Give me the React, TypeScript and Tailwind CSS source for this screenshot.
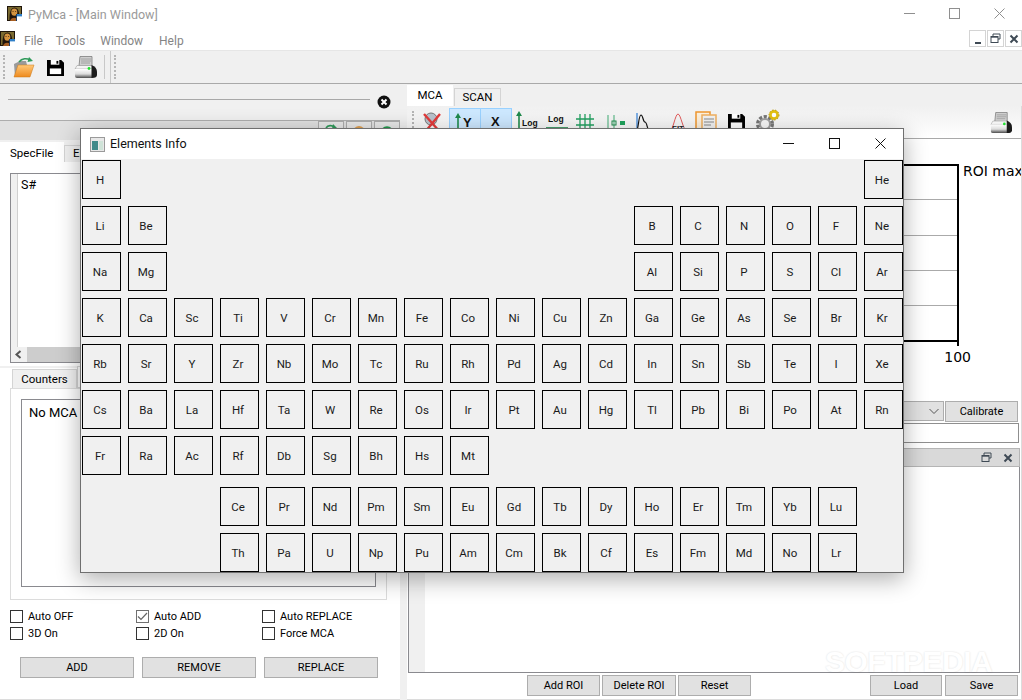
import React from "react";

const _ = null;
const rows: (string | null)[][] = [
  ["H", _, _, _, _, _, _, _, _, _, _, _, _, _, _, _, _, "He"],
  ["Li", "Be", _, _, _, _, _, _, _, _, _, _, "B", "C", "N", "O", "F", "Ne"],
  ["Na", "Mg", _, _, _, _, _, _, _, _, _, _, "Al", "Si", "P", "S", "Cl", "Ar"],
  ["K", "Ca", "Sc", "Ti", "V", "Cr", "Mn", "Fe", "Co", "Ni", "Cu", "Zn", "Ga", "Ge", "As", "Se", "Br", "Kr"],
  ["Rb", "Sr", "Y", "Zr", "Nb", "Mo", "Tc", "Ru", "Rh", "Pd", "Ag", "Cd", "In", "Sn", "Sb", "Te", "I", "Xe"],
  ["Cs", "Ba", "La", "Hf", "Ta", "W", "Re", "Os", "Ir", "Pt", "Au", "Hg", "Tl", "Pb", "Bi", "Po", "At", "Rn"],
  ["Fr", "Ra", "Ac", "Rf", "Db", "Sg", "Bh", "Hs", "Mt", _, _, _, _, _, _, _, _, _],
];
const rareEarth: (string | null)[][] = [
  [_, _, _, "Ce", "Pr", "Nd", "Pm", "Sm", "Eu", "Gd", "Tb", "Dy", "Ho", "Er", "Tm", "Yb", "Lu", _],
  [_, _, _, "Th", "Pa", "U", "Np", "Pu", "Am", "Cm", "Bk", "Cf", "Es", "Fm", "Md", "No", "Lr", _],
];

function Mona({ className = "" }: { className?: string }) {
  return (
    <svg viewBox="0 0 15 15" className={className}>
      <rect width="15" height="15" fill="#1e140a" />
      <rect x="1" y="1" width="13" height="13" fill="#7a6a30" />
      <path d="M2.5 14 C2.5 8 3 2 7.5 1.5 C12 2 12.5 8 12.5 14Z" fill="#21150b" />
      <ellipse cx="7.3" cy="6.2" rx="3" ry="3.6" fill="#d4933f" />
      <path d="M5.5 5.5H6.6M8 5.5H9.1" stroke="#4a2c10" strokeWidth="0.8" />
      <path d="M3 15 C4 10.5 10 10.5 12 15Z" fill="#a85f22" />
      <rect x="9" y="8" width="6" height="7" fill="#fff" />
      <rect x="9" y="8" width="6" height="2.4" fill="#2f7fc8" />
      <rect x="9" y="8" width="1" height="7" fill="#1d3d66" />
    </svg>
  );
}

function Floppy({ className = "" }: { className?: string }) {
  return (
    <svg viewBox="0 0 18 18" className={className}>
      <path d="M0 1 H15 L18 4 V18 H0Z" fill="#000" />
      <rect x="4" y="1" width="9" height="5" fill="#fff" />
      <rect x="10" y="2" width="2" height="3" fill="#000" />
      <rect x="3" y="10" width="12" height="6" fill="#fff" />
    </svg>
  );
}

function Printer({ className = "" }: { className?: string }) {
  return (
    <svg viewBox="0 0 23 23" className={className}>
      <defs>
        <linearGradient id="pb" x1="0" y1="0" x2="0" y2="1">
          <stop offset="0" stopColor="#ffffff" />
          <stop offset="0.55" stopColor="#dcdcdc" />
          <stop offset="1" stopColor="#4a4a4a" />
        </linearGradient>
      </defs>
      <path d="M6 0.5 H18 L18 10 H5Z" fill="#cfcfcf" stroke="#7c7c7c" strokeWidth="0.8" />
      <path d="M7 3H17M7 5H17M7 7H16" stroke="#989898" strokeWidth="0.8" />
      <path d="M3 9.5 H18 L19 13 H1Z" fill="#f4f4f4" stroke="#777" strokeWidth="0.4" />
      <path d="M1 13 H18 V22 H3 Q1 22 1 20Z" fill="url(#pb)" />
      <path d="M17.5 9 Q23 11 23 16 V19 Q23 22 18 22 H17.5Z" fill="#1c1c1c" />
      <circle cx="15" cy="12.5" r="1.4" fill="#22e030" />
    </svg>
  );
}

function Folder({ className = "" }: { className?: string }) {
  return (
    <svg viewBox="0 0 23 21" className={className}>
      <defs>
        <linearGradient id="fo" x1="0" y1="0" x2="0" y2="1">
          <stop offset="0" stopColor="#ffc878" />
          <stop offset="1" stopColor="#ee8a1e" />
        </linearGradient>
      </defs>
      <path d="M2 7 L8 4 H14 L15 8 L5 20 H3Z" fill="#9a9a9a" />
      <path d="M6 8 H22 L18 20 H2Z" fill="url(#fo)" stroke="#c9781a" strokeWidth="0.5" />
      <path d="M7 5 C10 1 15 1 18 3" fill="none" stroke="#2f9a5a" strokeWidth="1.6" />
      <path d="M17 0 L21 4 L15.5 5Z" fill="#2f9a5a" />
    </svg>
  );
}

function Handle({ className = "" }: { className?: string }) {
  return <div className={`w-[2px] border-l-2 border-dotted border-[#b5b5b5] ${className}`} />;
}

function Win10Controls({ color, widths }: { color: string; widths: string }) {
  return (
    <div className="flex items-center">
      <div className={`flex justify-center ${widths}`}>
        <svg width="11" height="11" viewBox="0 0 11 11"><path d="M0 5.5H11" stroke={color} /></svg>
      </div>
      <div className={`flex justify-center ${widths}`}>
        <svg width="11" height="11" viewBox="0 0 11 11"><rect x="0.5" y="0.5" width="10" height="10" fill="none" stroke={color} /></svg>
      </div>
      <div className={`flex justify-center ${widths}`}>
        <svg width="11" height="11" viewBox="0 0 11 11"><path d="M0.5 0.5L10.5 10.5M10.5 0.5L0.5 10.5" stroke={color} /></svg>
      </div>
    </div>
  );
}

function Check({ label, checked = false }: { label: string; checked?: boolean }) {
  return (
    <div className="flex h-[17px] w-[126px] items-center gap-[5px]">
      <span className={`flex h-[13px] w-[13px] items-center justify-center border bg-white ${checked ? "border-[#707070]" : "border-[#333]"}`}>
        {checked && (
          <svg width="11" height="11" viewBox="0 0 11 11"><path d="M1 5.5L4 8.5L10 2" fill="none" stroke="#666" strokeWidth="1.2" /></svg>
        )}
      </span>
      <span className="whitespace-nowrap">{label}</span>
    </div>
  );
}

function QtButton({ label, className = "" }: { label: string; className?: string }) {
  return (
    <button className={`flex h-[21px] items-center justify-center border border-[#adadad] bg-[#e1e1e1] pt-[2px] text-[11px] text-black ${className}`}>
      {label}
    </button>
  );
}

function Cell({ el }: { el: string | null }) {
  if (!el) return <div className="h-[39px] w-[39px]" />;
  return (
    <button className="flex h-[39px] w-[39px] items-center justify-center border border-black bg-[#f0f0f0] pr-[3px] pt-[2px] text-[11.5px] text-[#1a1a1a]">
      {el}
    </button>
  );
}

function MiniX() {
  return (
    <svg width="10" height="10" viewBox="0 0 10 10"><path d="M1.5 1.5L8.5 8.5M8.5 1.5L1.5 8.5" stroke="#3f4a55" strokeWidth="2" /></svg>
  );
}
function MiniRestore() {
  return (
    <svg width="11" height="11" viewBox="0 0 11 11">
      <path d="M3 3V1H10V6H8" fill="none" stroke="#3f4a55" />
      <rect x="1" y="3.5" width="7" height="6" fill="none" stroke="#3f4a55" />
      <path d="M1 4H8" stroke="#3f4a55" strokeWidth="1.4" />
    </svg>
  );
}

function McaTools() {
  return (
    <div className="flex h-full items-start pl-[5px] pt-[2px]">
      <Handle className="mt-[3px] h-[24px]" />
      <svg width="22" height="22" viewBox="0 0 22 22" className="ml-[8px] mt-[3px]">
        <circle cx="9" cy="8" r="6" fill="#b9c2cc" stroke="#777" />
        <path d="M2 3L18 21M18 3L3 21" stroke="#e23a3a" strokeWidth="2.4" />
      </svg>
      <div className="ml-[5px] flex h-[30px] w-[32px] items-start justify-center border border-[#99d1ff] bg-[#cde8ff]">
        <svg width="24" height="24" viewBox="0 0 24 24" className="mt-[3px]">
          <path d="M5 24V4" stroke="#1f8a4c" strokeWidth="1.6" />
          <path d="M5 1L8 6H2Z" fill="#1f8a4c" />
          <text x="10" y="15" fontSize="13" fontWeight="700" fontFamily="'Liberation Sans',sans-serif" fill="#111">Y</text>
        </svg>
      </div>
      <div className="flex h-[30px] w-[31px] items-start justify-center border border-l-0 border-[#99d1ff] bg-[#cde8ff]">
        <svg width="24" height="24" viewBox="0 0 24 24" className="mt-[3px]">
          <text x="7" y="14" fontSize="13" fontWeight="700" fontFamily="'Liberation Sans',sans-serif" fill="#111">X</text>
          <path d="M1 21H23" stroke="#1f8a4c" strokeWidth="1.6" />
        </svg>
      </div>
      <svg width="24" height="24" viewBox="0 0 24 24" className="ml-[4px] mt-[2px]">
        <path d="M3 24V4" stroke="#1f8a4c" strokeWidth="1.6" />
        <path d="M3 1L6 6H0Z" fill="#1f8a4c" />
        <text x="6" y="16" fontSize="8.5" fontWeight="700" fontFamily="'Liberation Sans',sans-serif" fill="#111">Log</text>
      </svg>
      <svg width="24" height="24" viewBox="0 0 24 24" className="ml-[5px] mt-[2px]">
        <text x="3" y="12" fontSize="8.5" fontWeight="700" fontFamily="'Liberation Sans',sans-serif" fill="#111">Log</text>
        <path d="M1 18H23" stroke="#1f8a4c" strokeWidth="1.6" />
      </svg>
      <svg width="20" height="20" viewBox="0 0 20 20" className="ml-[6px] mt-[6px]">
        <path d="M5 0V20M10 0V20M15 0V20M1 5H19M1 11H19" stroke="#22a060" strokeWidth="1.3" />
      </svg>
      <svg width="22" height="20" viewBox="0 0 22 20" className="ml-[12px] mt-[6px]">
        <path d="M1 1V20M7 1V20" stroke="#5fb98a" strokeWidth="1.2" />
        <rect x="5" y="7" width="4" height="4" fill="none" stroke="#1f8a4c" />
        <rect x="13" y="7" width="5" height="4" fill="#1fa35c" />
      </svg>
      <svg width="22" height="20" viewBox="0 0 22 20" className="ml-[6px] mt-[5px]">
        <path d="M2 20V0" stroke="#2f7fd8" strokeWidth="1.2" />
        <path d="M0 20C4 20 3 2 6 2C8 2 8 9 10 9C12 9 12 16 14 18C15 19 16 20 18 20" fill="none" stroke="#111" strokeWidth="1.2" />
      </svg>
      <svg width="22" height="22" viewBox="0 0 22 22" className="ml-[11px] mt-[4px]">
        <path d="M1 20C5 20 7 2 10 2C13 2 15 20 20 20" fill="none" stroke="#e25a5a" />
        <text x="4" y="19" fontSize="8" fontWeight="700" fontFamily="'Liberation Sans',sans-serif" fill="#222">FIT</text>
      </svg>
      <svg width="22" height="22" viewBox="0 0 22 22" className="ml-[5px] mt-[3px]">
        <rect x="1" y="1" width="14" height="17" fill="#fdf0dc" stroke="#f0972e" strokeWidth="1.5" />
        <rect x="7" y="4" width="14" height="14" fill="#f2f2f2" stroke="#f0b060" strokeWidth="1.5" />
        <path d="M9 8H19M9 11H19M9 14H16" stroke="#8a8a8a" />
      </svg>
      <Floppy className="ml-[11px] mt-[5px] h-[17px] w-[17px]" />
      <svg width="25" height="24" viewBox="0 0 25 24" className="ml-[10px] mt-[1px]">
        <circle cx="10" cy="15" r="7" fill="none" stroke="#777" strokeWidth="4" strokeDasharray="3 1.5" />
        <circle cx="10" cy="15" r="5" fill="none" stroke="#a0a0a0" strokeWidth="2" />
        <circle cx="19" cy="6" r="3.6" fill="#fff" stroke="#e3c010" strokeWidth="2.6" />
        <circle cx="19" cy="6" r="5" fill="none" stroke="#b89a10" strokeWidth="1" strokeDasharray="1.5 1.5" />
      </svg>
      <Printer className="ml-auto mr-[9px] mt-[4px] h-[22px] w-[22px]" />
    </div>
  );
}

export default function App() {
  return (
    <div className="relative flex h-[700px] w-[1022px] flex-col overflow-hidden bg-[#f0f0f0] font-['Roboto',sans-serif] text-[12px] text-black">
      {/* Title bar */}
      <div className="flex h-[27px] items-center bg-white">
        <Mona className="ml-[7px] h-[15px] w-[15px]" />
        <span className="ml-[6px] pt-[3px] text-[12.5px] text-[#9a9a9a]">PyMca - [Main Window]</span>
        <div className="ml-auto">
          <Win10Controls color="#8f8f8f" widths="w-[45px]" />
        </div>
      </div>
      {/* Menu bar */}
      <div className="flex h-[24px] items-center border-b border-[#e6e6e6] bg-white text-[12px] text-[#858585]">
        <Mona className="h-[15px] w-[15px]" />
        <span className="ml-[9px] pt-[5px]">File</span>
        <span className="ml-[13px] pt-[5px]">Tools</span>
        <span className="ml-[15px] pt-[5px]">Window</span>
        <span className="ml-[16px] pt-[5px]">Help</span>
        <div className="ml-auto flex gap-[1px]">
          <div className="flex h-[17px] w-[17px] items-end justify-center border border-[#d4d4d4] pb-[2px]">
            <div className="h-[2px] w-[6px] bg-[#3f4a55]" />
          </div>
          <div className="flex h-[17px] w-[17px] items-center justify-center border border-[#d4d4d4]"><MiniRestore /></div>
          <div className="flex h-[17px] w-[17px] items-center justify-center border border-[#d4d4d4]"><MiniX /></div>
        </div>
      </div>
      {/* Main toolbar */}
      <div className="flex h-[33px] items-center border-b border-[#a9a9a9] bg-[#f0f0f0] pl-[3px]">
        <Handle className="h-[24px]" />
        <Folder className="ml-[7px] h-[21px] w-[23px]" />
        <Floppy className="ml-[12px] h-[17px] w-[17px]" />
        <Printer className="ml-[10px] h-[23px] w-[23px]" />
        <div className="ml-[7px] h-[24px] w-px bg-[#c8c8c8]" />
        <div className="ml-[5px] h-[32px] w-px bg-[#c8c8c8]" />
        <Handle className="ml-[3px] h-[24px]" />
      </div>

      {/* Body */}
      <div className="flex min-h-0 flex-1">
        {/* Left column */}
        <div className="flex w-[400px] flex-col">
          <div className="flex h-[36px] items-center pl-[8px]">
            <div className="mt-[-6px] h-px w-[362px] bg-[#a8a8a8]" />
            <svg width="14" height="14" viewBox="0 0 14 14" className="ml-[7px] mt-[-1px]">
              <circle cx="7" cy="7" r="6.5" fill="#111" />
              <path d="M4.5 4.5L9.5 9.5M9.5 4.5L4.5 9.5" stroke="#fff" strokeWidth="2" />
            </svg>
          </div>
          <div className="flex h-[20px] gap-[2px] border-t border-[#adadad] bg-[#e1e1e1]">
            <div className="flex-1" />
            <div className="ml-auto flex h-[20px] w-[26px] justify-center border border-[#adadad] bg-[#e8e8e8]">
              <svg width="14" height="12" viewBox="0 0 14 12" className="mt-[1px]"><path d="M2 5C4 2 8 2 10 4" fill="none" stroke="#2f9a5a" strokeWidth="1.6" /><path d="M9 1L13 5L8 6Z" fill="#2f9a5a" /></svg>
            </div>
            <div className="flex h-[20px] w-[26px] justify-center border border-[#adadad] bg-[#e8e8e8]">
              <svg width="14" height="14" viewBox="0 0 14 14" className="mt-[2px]"><circle cx="7" cy="8" r="6" fill="#e0a050" /><rect x="3" y="5" width="8" height="3" fill="#5a3a1a" /></svg>
            </div>
            <div className="flex h-[20px] w-[26px] justify-center border border-[#adadad] bg-[#e8e8e8]">
              <svg width="16" height="14" viewBox="0 0 16 14" className="mt-[1px]"><path d="M2.5 10A5.5 5.5 0 0 1 13.5 10" fill="none" stroke="#1f9a4c" strokeWidth="2.4" /></svg>
            </div>
          </div>
          <div className="mt-[2px] flex h-[20px] items-end">
            <div className="flex h-[20px] w-[64px] items-center bg-white pl-[10px] pt-[3px] text-[11.5px]">SpecFile</div>
            <div className="flex h-[17px] w-[50px] items-center border border-b-0 border-[#d4d4d4] pl-[8px] text-[11.5px]">EDF</div>
            <div className="h-px flex-1 bg-[#d4d4d4]" />
          </div>
          <div className="flex flex-1 flex-col border-b border-[#dcdcdc] bg-white">
            <div className="ml-[10px] mr-[13px] mt-[11px] flex h-[190px] flex-col border border-[#8a8a8f]">
              <div className="flex min-h-0 flex-1">
                <div className="w-[7px] border-r border-[#d0d0d0] bg-[#f0f0f0]" />
                <span className="ml-[3px] mt-[2px] text-[12.5px]">S#</span>
              </div>
              <div className="flex h-[15px] items-center bg-[#f0f0f0]">
                <svg width="16" height="15" viewBox="0 0 16 15"><path d="M9.5 4L5.5 7.5L9.5 11" fill="none" stroke="#555" strokeWidth="2" /></svg>
                <div className="h-full w-[120px] bg-[#cdcdcd]" />
              </div>
            </div>
            <div className="mt-[3px] h-[2px] bg-[#f0f0f0]" />
            <div className="ml-[12px] mt-[1px] flex h-[19px]">
              <div className="flex h-[19px] w-[65px] items-center justify-center border border-b-0 border-[#d4d4d4] bg-[#f0f0f0] pt-[2px] text-[11.5px]">Counters</div>
              <div className="h-[22px] w-[60px] -translate-y-[3px] border border-[#d4d4d4] bg-white" />
            </div>
            <div className="ml-[10px] mr-[13px] flex h-[212px] flex-col border border-[#dcdcdc] bg-white px-[10px] pb-[12px] pt-[10px]">
              <div className="flex-1 border border-[#8a8a8f] pl-[7px] pt-[3px] text-[13px]">No MCA found</div>
            </div>
            <div className="ml-[10px] mt-[8px] flex flex-wrap text-[11px] leading-[17px]">
              <Check label="Auto OFF" />
              <Check label="Auto ADD" checked />
              <Check label="Auto REPLACE" />
              <Check label="3D On" />
              <Check label="2D On" />
              <Check label="Force MCA" />
            </div>
            <div className="ml-[20px] mt-[15px] flex gap-[8px]">
              <QtButton label="ADD" className="w-[114px]" />
              <QtButton label="REMOVE" className="w-[114px]" />
              <QtButton label="REPLACE" className="w-[114px]" />
            </div>
          </div>
        </div>

        {/* Right column */}
        <div className="ml-[7px] flex min-w-0 flex-1 flex-col">
          <div className="flex h-[22px] items-end text-[11.5px]">
            <div className="flex h-[21px] w-[46px] items-center justify-center bg-white pt-[1px]">MCA</div>
            <div className="ml-[1px] flex h-[18px] w-[47px] items-center justify-center border border-b-0 border-[#d4d4d4]">SCAN</div>
          </div>
          <div className="flex flex-1 flex-col border-b border-r border-[#dcdcdc] bg-white">
            <div className="h-[33px] border-b border-[#a9a9a9] bg-gradient-to-b from-[#f0f0f0] to-white">
              <McaTools />
            </div>
            <div className="flex h-[262px] overflow-hidden pl-[40px] pt-[25px]">
              <div className="flex flex-1 flex-col items-end">
                <div className="flex h-[178px] w-full flex-col border-2 border-black">
                  <div className="h-[34px] border-b border-[#aaa]" />
                  <div className="h-[36px] border-b border-[#aaa]" />
                  <div className="h-[35px] border-b border-[#aaa]" />
                  <div className="h-[35px] border-b border-[#aaa]" />
                </div>
                <div className="h-[4px] w-[2px] bg-black" />
                <div className="mr-[-12px] mt-[3px] font-['DejaVu_Sans',sans-serif] text-[14px] leading-[17px]">100</div>
              </div>
              <div className="ml-[4px] w-[58px] overflow-hidden whitespace-nowrap font-['DejaVu_Sans',sans-serif] text-[14px] leading-[14px]">ROI max</div>
            </div>
            <div className="flex h-[20px] items-stretch gap-[1px] pl-[1px] pr-[3px]">
              <div className="flex flex-1 items-center justify-end border border-[#adadad] bg-[#e1e1e1] pr-[3px]">
                <svg width="12" height="12" viewBox="0 0 12 12"><path d="M1.5 4L6 8.5L10.5 4" fill="none" stroke="#555" /></svg>
              </div>
              <QtButton label="Calibrate" className="h-[20px] w-[73px]" />
            </div>
            <div className="ml-[1px] mr-[2px] mt-[2px] h-[20px] border border-[#8f8f8f] bg-white" />
            <div className="ml-[1px] mr-[1px] mt-[5px] flex h-[19px] items-center justify-end gap-[11px] border border-[#b5b5b5] bg-[#d9d9d9] pr-[6px]">
              <MiniRestore />
              <MiniX />
            </div>
            <div className="ml-[1px] mr-[1px] flex h-[206px] border border-t-0 border-[#8a8a8f]">
              <div className="w-[16px] bg-[#f0f0f0]" />
            </div>
            <div className="mt-[2px] flex">
              <QtButton label="Add ROI" className="ml-[120px] w-[73px]" />
              <QtButton label="Delete ROI" className="ml-[2px] w-[74px]" />
              <QtButton label="Reset" className="ml-[2px] w-[73px]" />
              <QtButton label="Load" className="ml-auto w-[72px]" />
              <QtButton label="Save" className="ml-[3px] mr-[3px] w-[73px]" />
            </div>
          </div>
        </div>
      </div>

      {/* Watermark */}
      <div className="pointer-events-none absolute left-[825px] top-[645px] font-['Liberation_Sans',sans-serif] text-[30px] font-bold leading-[34px] tracking-[-0.5px] text-white [text-shadow:0_0_2px_rgba(0,0,0,0.14)]">
        SOFTPEDIA
      </div>

      {/* Elements Info window */}
      <div className="absolute left-[80px] top-[128px] flex h-[445px] w-[824px] flex-col border border-[#6f6f6f] bg-[#f0f0f0] shadow-[0_6px_22px_rgba(0,0,0,0.32)]">
        <div className="flex h-[30px] items-center bg-white">
          <svg width="15" height="15" viewBox="0 0 15 15" className="ml-[9px]">
            <rect x="0.5" y="0.5" width="14" height="14" fill="#e8e8e8" stroke="#9a9a9a" />
            <rect x="2" y="4" width="6" height="9" fill="#3f8a8a" />
            <rect x="9" y="4" width="4" height="9" fill="#cfe3d8" />
          </svg>
          <span className="ml-[5px] text-[12.5px] text-[#111]">Elements Info</span>
          <div className="ml-auto -mt-[2px]">
            <Win10Controls color="#111" widths="w-[46px]" />
          </div>
        </div>
        <div className="pl-[1px] pt-[1px]">
          <div className="grid grid-cols-[repeat(18,39px)] gap-[7px]">
            {rows.flat().map((el, i) => (
              <Cell key={i} el={el} />
            ))}
          </div>
          <div className="mt-[12px] grid grid-cols-[repeat(18,39px)] gap-[7px]">
            {rareEarth.flat().map((el, i) => (
              <Cell key={i} el={el} />
            ))}
          </div>
        </div>
      </div>
    </div>
  );
}
